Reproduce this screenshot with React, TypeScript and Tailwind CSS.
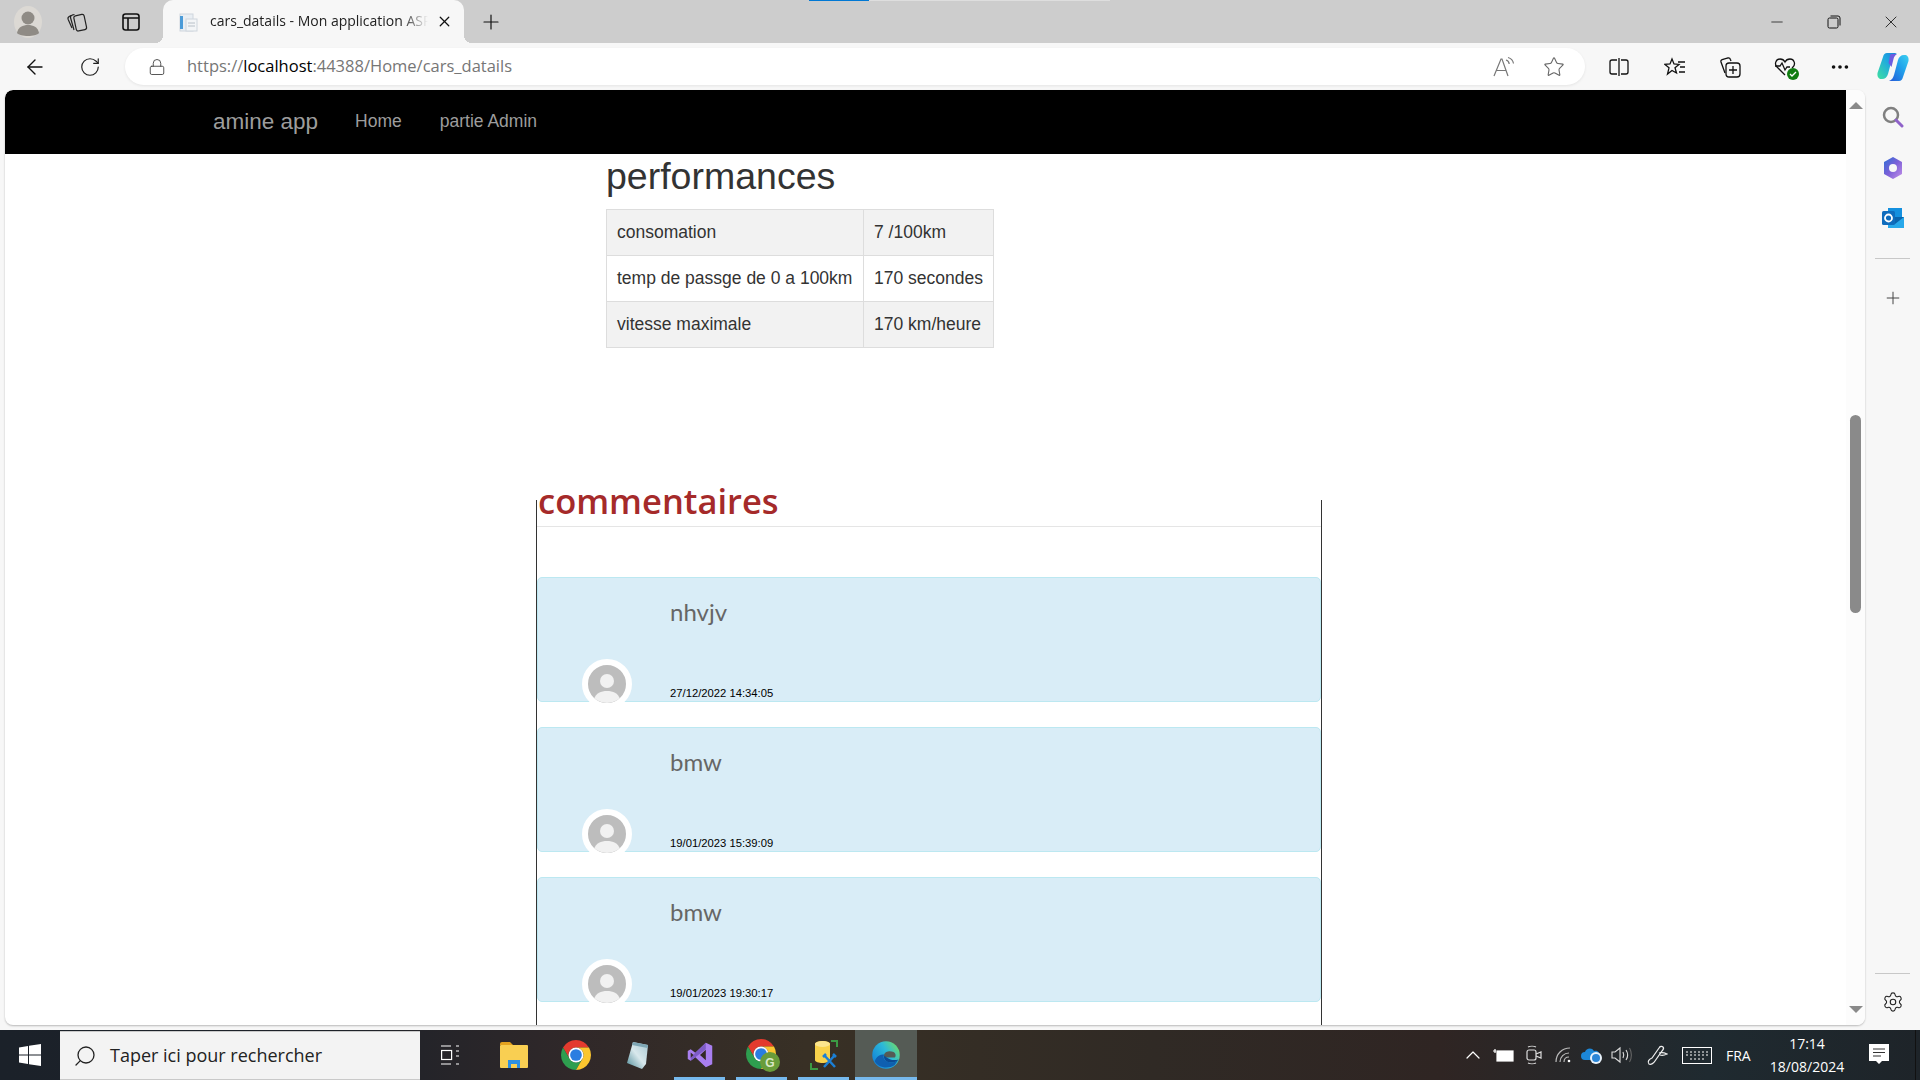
import { ArrowLeft, RotateCw, Plus, X, Minus, Star, Search, Ellipsis, Settings, ChevronUp, Lock } from "lucide-react"

const ui = "font-['Open_Sans',sans-serif]"

function Chrome({ size = 30 }: { size?: number }) {
  return (
    <svg width={size} height={size} viewBox="4 4 40 40">
      <path d="M6.68 14A20 20 0 0 1 41.32 14H24A10 10 0 0 0 15.34 29Z" fill="#e33b2e" />
      <path d="M6.68 14L15.34 29A10 10 0 0 0 32.66 29L24 44A20 20 0 0 1 6.68 14Z" fill="#2e9e4f" />
      <path d="M41.32 14A20 20 0 0 1 24 44L32.66 29A10 10 0 0 0 24 14Z" fill="#fbc62f" />
      <circle cx="24" cy="24" r="10" fill="#fff" />
      <circle cx="24" cy="24" r="7.8" fill="#2a7de1" />
    </svg>
  )
}

function Edge({ size = 30 }: { size?: number }) {
  return (
    <svg width={size} height={size} viewBox="0 0 48 48">
      <defs>
        <linearGradient id="edgeA" x1="1" y1="0.2" x2="0.1" y2="0.8">
          <stop offset="0" stopColor="#6fdc6a" />
          <stop offset="0.45" stopColor="#2cb9d8" />
          <stop offset="1" stopColor="#1487d9" />
        </linearGradient>
      </defs>
      <circle cx="24" cy="24" r="22" fill="url(#edgeA)" />
      <path d="M6 34c4 9 20 14 32 6l6-9c-5 5-11 5-16 4-7-2-9-7-7-12-6 0-13 3-15 11z" fill="#0f5fb0" />
      <path d="M21 23c2-6 10-6 15-4 4 2 4 7 2 9H26c-4 0-6-2-5-5z" fill="#555b55" />
      <path d="M21 25c-1 5 2 9 7 10 6 1 11 1 16-4-3 1-9 2-13 0-5-2-6-4-10-6z" fill="#0b4a94" />
    </svg>
  )
}

function VisualStudio() {
  return (
    <svg width="28" height="30" viewBox="0 0 48 48">
      <path d="M34 3L45 8V40L34 45L16 28L8 34L3 31V17L8 14L16 20Z" fill="#a97ff0" />
      <path d="M34 3L8 28V34L34 14Z" fill="#7e5cc6" />
      <path d="M34 15L24 24L34 33Z" fill="#332a26" />
      <path d="M8 19.5V28.5L13 24Z" fill="#332a26" />
    </svg>
  )
}

function Folder() {
  return (
    <svg width="30" height="28" viewBox="0 0 30 28">
      <path d="M1 3a2 2 0 0 1 2-2h8l3 3H1z" fill="#e3a21f" />
      <rect x="1" y="4" width="28" height="23" rx="1" fill="#f9cf52" />
      <path d="M9 27v-8h12v8h-3v-4h-6v4z" fill="#2d8fe0" />
    </svg>
  )
}

function Notepad() {
  return (
    <svg width="28" height="30" viewBox="0 0 28 30">
      <defs>
        <linearGradient id="padA" x1="0" y1="1" x2="1" y2="0">
          <stop offset="0" stopColor="#4d8b98" />
          <stop offset="0.5" stopColor="#d8e8ec" />
          <stop offset="1" stopColor="#a9c8d2" />
        </linearGradient>
      </defs>
      <path d="M9 2L24 5L22 24L18 29L3 23Z" fill="url(#padA)" />
      <path d="M9 2L24 5L23.6 8L8 5Z" fill="#7fa7b5" />
    </svg>
  )
}

function ChromeG() {
  return (
    <div className="relative w-[32px] h-[32px]">
      <Chrome size={30} />
      <svg width="20" height="20" viewBox="0 0 20 20" className="absolute right-[-2px] bottom-[-1px]">
        <circle cx="10" cy="10" r="10" fill="#6a9c3a" />
        <text x="10" y="14.5" textAnchor="middle" fontSize="12" fontWeight="700" fill="#dbe8c8" fontFamily="Liberation Sans">
          G
        </text>
      </svg>
    </div>
  )
}

function DbTools() {
  return (
    <svg width="30" height="32" viewBox="0 0 30 32">
      <path d="M6 5c0-4 15-4 15 0v16c0 4-15 4-15 0z" fill="#f8d24b" />
      <ellipse cx="13.5" cy="5" rx="7.5" ry="3" fill="#fbe58e" />
      <path d="M22 2h6v6M2 24v6h7" fill="none" stroke="#3b9a44" strokeWidth="2" />
      <path d="M15 28l11-12M26 28L15 16M14 18l3-3M24 15l3 3" stroke="#1b7fd6" strokeWidth="2.5" fill="none" />
    </svg>
  )
}

function Copilot() {
  return (
    <svg width="32" height="30" viewBox="0 0 32 30">
      <defs>
        <linearGradient id="copA" x1="0" y1="1" x2="1" y2="0">
          <stop offset="0" stopColor="#3fe0a0" />
          <stop offset="0.6" stopColor="#1fa8e0" />
          <stop offset="1" stopColor="#1a7fd8" />
        </linearGradient>
        <linearGradient id="copB" x1="0" y1="1" x2="1" y2="0">
          <stop offset="0" stopColor="#2458d8" />
          <stop offset="0.6" stopColor="#22a6ec" />
          <stop offset="1" stopColor="#3ed0f0" />
        </linearGradient>
      </defs>
      <path d="M10 1h10c-3 1-4 3-5 6l-4 15c-.8 3-3 5-6 5H3c-2-1-3-3-2.500-6L6 5c.6-2.500 2-4 4-4z" fill="url(#copA)" />
      <path d="M22 29H12c3-1 4-3 5-6l4-15c.8-3 3-5 6-5h2c2 1 3 3 2.500 6L26 25c-.6 2.500-2 4-4 4z" fill="url(#copB)" />
      <path d="M14 2h6c-2 1-3 3-3.500 5l-2 8-3-4 1-5c.4-2 .5-3 1.500-4z" fill="#6c5ce0" />
    </svg>
  )
}

function TabBar() {
  return (
    <div className={`relative h-[43px] bg-[#cdcdcd] flex items-end ${ui}`}>
      <div className="absolute top-0 left-[809px] w-[301px] h-px bg-[#dedede]">
        <div className="w-[60px] h-px bg-[#0078d4]" />
      </div>
      <div className="h-[43px] w-[56px] flex items-center justify-center">
        <svg width="30" height="32" viewBox="0 0 30 32">
          <ellipse cx="15" cy="16" rx="14" ry="16" fill="#dcd9d4" />
          <circle cx="15" cy="12" r="6.5" fill="#8f8b85" />
          <path d="M4 27c1-6 6-8 11-8s10 2 11 8c-3 4-19 4-22 0z" fill="#8f8b85" />
        </svg>
      </div>
      <div className="h-[43px] w-[42px] flex items-center justify-center">
        <svg width="22" height="22" viewBox="0 0 22 22" fill="none" stroke="#222" strokeWidth="1.2">
          <rect x="9" y="4" width="10.500" height="15.500" rx="2" transform="rotate(-12 14 12)" />
          <path d="M8.500 3.500L6 4.200C4.700 4.600 4.200 5.600 4.600 7L8 19" />
          <path d="M5 4.500L3.200 5.500C2 6.200 1.700 7.300 2.200 8.500L6 17" />
        </svg>
      </div>
      <div className="h-[43px] w-[65px] flex items-center justify-center">
        <svg width="18" height="18" viewBox="0 0 18 18" fill="none" stroke="#111" strokeWidth="1.6">
          <rect x="1" y="1" width="16" height="16" rx="2.500" />
          <path d="M1 5h16M6 5v12" />
        </svg>
      </div>
      <div className="relative h-[43px] w-[301px] bg-[#f7f7f7] rounded-t-[10px] flex items-center">
        <span className="absolute bottom-0 left-[-8px] w-[8px] h-[8px] bg-[radial-gradient(circle_at_0_0,#cdcdcd_8px,#f7f7f7_8px)]" />
        <span className="absolute bottom-0 right-[-8px] w-[8px] h-[8px] bg-[radial-gradient(circle_at_100%_0,#cdcdcd_8px,#f7f7f7_8px)]" />
        <svg width="20" height="20" viewBox="0 0 20 20" className="ml-[15px] shrink-0">
          <rect x="2" y="2" width="13" height="17" fill="#e9eef3" stroke="#cfd6dd" />
          <rect x="2" y="4" width="3" height="13" fill="#4b9bd8" />
          <rect x="8" y="7" width="11" height="12" fill="#f3f5f7" stroke="#cfd6dd" />
          <path d="M10 11h7M10 14h7" stroke="#b8c0c8" />
        </svg>
        <div className="ml-[12px] -mt-[2px] w-[218px] overflow-hidden whitespace-nowrap text-[14px] text-[#222] [mask-image:linear-gradient(to_right,black_88%,transparent)]">
          cars_datails - Mon application ASP.NET
        </div>
        <X size={17} strokeWidth={1.8} className="ml-[8px] text-[#111]" />
      </div>
      <div className="h-[43px] w-[54px] flex items-center justify-center">
        <Plus size={24} strokeWidth={1.2} className="text-[#111]" />
      </div>
      <div className="ml-auto h-[43px] flex items-center text-[#111]">
        <div className="w-[56px] flex justify-center pr-[2px]">
          <Minus size={18} strokeWidth={1} />
        </div>
        <div className="w-[56px] flex justify-center">
          <svg width="14" height="14" viewBox="0 0 14 14" fill="none" stroke="#111" strokeWidth="1">
            <rect x="1" y="3" width="10" height="10" rx="1.500" />
            <path d="M3.500 1h7.500a2 2 0 0 1 2 2v7.500" />
          </svg>
        </div>
        <div className="w-[58px] flex justify-center">
          <X size={20} strokeWidth={1} />
        </div>
      </div>
    </div>
  )
}

function Toolbar() {
  return (
    <div className={`h-[47px] bg-[#f7f7f7] flex items-center ${ui}`}>
      <div className="w-[70px] flex justify-center">
        <ArrowLeft size={24} strokeWidth={1.4} className="text-[#111]" />
      </div>
      <div className="w-[40px] flex justify-center">
        <RotateCw size={22} strokeWidth={1.3} className="text-[#222]" />
      </div>
      <div className="ml-[15px] w-[1460px] h-[37px] rounded-full bg-white shadow-[0_1px_3px_rgba(0,0,0,0.08)] flex items-center">
        <Lock size={18} strokeWidth={1.2} className="ml-[23px] text-[#444]" />
        <div className="ml-[21px] text-[16.5px] text-[#767676]">
          https://<span className="text-black">localhost</span>:44388/Home/cars_datails
        </div>
        <svg width="22" height="22" viewBox="0 0 22 22" fill="none" stroke="#777" strokeWidth="1.2" className="ml-auto mr-[28px]">
          <path d="M1 20L8 3h1l6 17M3.500 14.500h9.500" />
          <path d="M13 4c2 .5 3 2 3.200 4M15 1.500c3 .8 5 3 5.500 6" />
        </svg>
        <Star size={22} strokeWidth={1.2} className="mr-[20px] text-[#666]" />
      </div>
      <div className="ml-[23px] flex items-center text-[#111]">
        <div className="w-[22px] flex justify-center">
          <svg width="20" height="20" viewBox="0 0 20 20" fill="none" stroke="#111" strokeWidth="1.3">
            <path d="M8 3H3a2 2 0 0 0-2 2v10a2 2 0 0 0 2 2h5M12 3h5a2 2 0 0 1 2 2v10a2 2 0 0 1-2 2h-5M10 1v18" />
          </svg>
        </div>
        <div className="ml-[34px] w-[22px] flex justify-center">
          <svg width="22" height="20" viewBox="0 0 22 20" fill="none" stroke="#111" strokeWidth="1.3">
            <path d="M8 2l2 5 5 .4-4 3.400 1.500 5.200L8 13.500 3.500 17 5 10.800 1 7.400 6 7z" />
            <path d="M14 5h7M16 10h5M15 15h6" />
          </svg>
        </div>
        <div className="ml-[33px] w-[22px] flex justify-center">
          <svg width="22" height="22" viewBox="0 0 22 22" fill="none" stroke="#111" strokeWidth="1.3">
            <path d="M6 17L2 6c-.3-1 .2-2 1.200-2.300L9 2c1-.2 2 .3 2.300 1.200L12 5" />
            <rect x="7" y="7" width="14" height="14" rx="3" />
            <path d="M14 10v8M10 14h8" />
          </svg>
        </div>
        <div className="ml-[33px] relative w-[22px] flex justify-center">
          <svg width="22" height="20" viewBox="0 0 22 20" fill="none" stroke="#111" strokeWidth="1.3">
            <path d="M11 18L3 10C0 7 2 2 6 2c2 0 4 1 5 3 1-2 3-3 5-3 4 0 6 5 3 8l-1 1" />
            <path d="M1 9h5l2-3 3 7 2-3h3" />
          </svg>
          <svg width="12" height="12" viewBox="0 0 12 12" className="absolute right-[-3px] bottom-[-3px]">
            <circle cx="6" cy="6" r="6" fill="#107c10" />
            <path d="M3 6l2 2 4-4" stroke="#fff" strokeWidth="1.300" fill="none" />
          </svg>
        </div>
        <div className="ml-[33px] w-[22px] flex justify-center">
          <Ellipsis size={22} strokeWidth={2} />
        </div>
        <div className="ml-[26px] w-[32px] flex justify-center">
          <Copilot />
        </div>
      </div>
    </div>
  )
}

function Avatar() {
  return (
    <div className="relative z-10 shrink-0 w-[50px] h-[50px] rounded-full border-[6px] border-white bg-[#bdbdbd] overflow-hidden -mb-[8px] mt-auto ml-[44px]">
      <svg width="38" height="38" viewBox="0 0 38 38">
        <circle cx="19" cy="16" r="7" fill="#f1f1f1" />
        <path d="M6 34c2-6 7-8 13-8s11 2 13 8v4H6z" fill="#f1f1f1" />
      </svg>
    </div>
  )
}

function Comment({ text, date }: { text: string; date: string }) {
  return (
    <div className="h-[125px] mb-[25px] flex bg-[#d9edf7] border border-[#bce8f1] rounded-[5px]">
      <Avatar />
      <div className="ml-[38px] flex flex-col flex-1">
        <div className="mt-[18px] text-[24px] leading-[32px] text-[#666] font-['Lato',sans-serif]">{text}</div>
        <div className="mt-auto text-[11.25px] leading-[16px] text-black font-['Liberation_Sans',sans-serif]">{date}</div>
      </div>
    </div>
  )
}

function Perf({ label, value, odd }: { label: string; value: string; odd?: boolean }) {
  const cell = `border border-[#ddd] px-[10px] py-[10px] leading-[25px] whitespace-nowrap ${odd ? "bg-[#f2f2f2]" : "bg-white"}`
  return (
    <tr>
      <td className={`${cell} w-[257px]`}>{label}</td>
      <td className={cell}>{value}</td>
    </tr>
  )
}

function Page() {
  return (
    <div className="w-[1841px] h-full overflow-hidden font-['Liberation_Sans',sans-serif]">
      <nav className="h-[64px] bg-black flex items-center text-[#9d9d9d] text-[17.5px] pl-[208px] rounded-tl-[8px]">
        <span className="text-[22.5px]">amine app</span>
        <span className="ml-[37px] -mt-[2px]">Home</span>
        <span className="ml-[38px] -mt-[2px]">partie Admin</span>
      </nav>
      <div className="ml-[601px]">
        <h2 className="h-[55px] pb-[10px] flex items-center text-[37.5px] text-[#333] leading-none">performances</h2>
        <table className="border-collapse text-[17.5px] text-[#333]">
          <tbody>
            <Perf label="consomation" value="7 /100km" odd />
            <Perf label="temp de passge de 0 a 100km" value="170 secondes" />
            <Perf label="vitesse maximale" value="170 km/heure" odd />
          </tbody>
        </table>
      </div>
      <div className="mt-[152px] ml-[531px] w-[786px] h-[600px] border-x border-[#333]">
        <div className="flex h-[27px] border-b border-[#e5e5e5] mb-[50px]">
          <h2 className="-mt-[17px] pl-[1px] h-[36px] text-[#a52a2a] text-[34.5px] leading-[36px] font-semibold font-['Open_Sans',sans-serif]">commentaires</h2>
        </div>
        <Comment text="nhvjv" date="27/12/2022 14:34:05" />
        <Comment text="bmw" date="19/01/2023 15:39:09" />
        <Comment text="bmw" date="19/01/2023 19:30:17" />
      </div>
    </div>
  )
}

function Scrollbar() {
  return (
    <div className="w-[19px] h-full bg-[#fcfcfc] flex flex-col items-center">
      <div className="mt-[12px] w-0 h-0 border-x-[7px] border-x-transparent border-b-[7px] border-b-[#8a8a8a]" />
      <div className="mt-[306px] w-[11px] h-[198px] rounded-full bg-[#8a8a8a]" />
      <div className="mt-auto mb-[12px] w-0 h-0 border-x-[7px] border-x-transparent border-t-[7px] border-t-[#8a8a8a]" />
    </div>
  )
}

function Sidebar() {
  return (
    <div className="flex-1 h-[935px] flex flex-col items-center">
      <div className="mt-[15px] h-[24px]">
        <svg width="22" height="24" viewBox="0 0 22 24" fill="none">
          <circle cx="9" cy="10" r="7" stroke="#808080" strokeWidth="2.500" />
          <path d="M14 15l6 6" stroke="#8f62c9" strokeWidth="3" strokeLinecap="round" />
        </svg>
      </div>
      <div className="mt-[27px] h-[24px]">
        <svg width="22" height="24" viewBox="0 0 22 24">
          <defs>
            <linearGradient id="m365" x1="0" y1="0" x2="1" y2="1">
              <stop offset="0" stopColor="#2d6fd6" />
              <stop offset="0.5" stopColor="#7c60d8" />
              <stop offset="1" stopColor="#c490e8" />
            </linearGradient>
          </defs>
          <path d="M11 1l9 5v12l-9 5-9-5V6z" fill="url(#m365)" />
          <circle cx="11" cy="12" r="4" fill="#f7f7f7" />
        </svg>
      </div>
      <div className="mt-[27px] h-[22px]">
        <svg width="22" height="22" viewBox="0 0 22 22">
          <rect x="6" y="1" width="14" height="10" fill="#1490df" />
          <path d="M6 10l16 0v11H6z" fill="#28a8ea" />
          <path d="M22 10L13 17l-7-5v-2z" fill="#0a64ad" />
          <rect x="0" y="4" width="13" height="14" rx="1.500" fill="#0f6cbd" />
          <circle cx="6.500" cy="11" r="3.500" fill="none" stroke="#fff" strokeWidth="1.800" />
        </svg>
      </div>
      <div className="mt-[29px] w-[35px] h-px bg-[#c8c8c8]" />
      <Plus size={20} strokeWidth={1.2} className="mt-[29px] text-[#444]" />
      <div className="mt-auto w-[35px] h-px bg-[#c8c8c8]" />
      <Settings size={22} strokeWidth={1.2} className="mt-[17px] mb-[12px] text-[#222]" />
    </div>
  )
}

function TaskIcon({ children, active, open }: { children: React.ReactNode; active?: boolean; open?: boolean }) {
  return (
    <div className={`relative w-[62px] h-[50px] flex items-center justify-center ${active ? "bg-[#555b55]" : ""}`}>
      {children}
      {open && <span className={`absolute bottom-0 h-[3px] bg-[#76b9ed] ${active ? "left-0 right-0" : "left-[5px] right-[6px]"}`} />}
    </div>
  )
}

function Taskbar() {
  return (
    <div className={`h-[50px] flex items-center bg-[linear-gradient(to_right,#1b2129_0%,#1e2229_18%,#302829_30%,#383025_42%,#302a25_60%,#2f2523_75%,#1f2a30_89%,#1e2429_100%)] ${ui}`}>
      <div className="w-[60px] flex justify-center">
        <svg width="22" height="22" viewBox="0 0 22 22" fill="#fff">
          <path d="M0 3.500L9 2v8.500H0zM10 1.800L22 0v10.500H10zM0 11.500h9V20l-9-1.500zM10 11.500h12V22l-12-1.800z" />
        </svg>
      </div>
      <div className="w-[360px] h-[49px] mt-px bg-[#f3f3f3] border-y border-[#c9c9c9] flex items-center">
        <Search size={24} strokeWidth={1.3} className="ml-[13px] -scale-x-100 text-[#222]" />
        <span className="ml-[13px] text-[18px] text-[#222]">Taper ici pour rechercher</span>
      </div>
      <div className="w-[60px] flex justify-center">
        <svg width="18" height="20" viewBox="0 0 18 20" fill="none" stroke="#fff" strokeWidth="1.200">
          <path d="M0 1h10M15 1h3M0 19h10M15 19h3M15 6h3M15 11h3" />
          <rect x=".6" y="5.500" width="10" height="9" />
        </svg>
      </div>
      <div className="ml-[3px] flex">
        <TaskIcon><Folder /></TaskIcon>
        <TaskIcon><Chrome /></TaskIcon>
        <TaskIcon><Notepad /></TaskIcon>
        <TaskIcon open><VisualStudio /></TaskIcon>
        <TaskIcon open><ChromeG /></TaskIcon>
        <TaskIcon open><DbTools /></TaskIcon>
        <TaskIcon open active><Edge /></TaskIcon>
      </div>
      <div className="ml-auto flex items-center text-white">
        <ChevronUp size={24} strokeWidth={1.2} />
        <svg width="22" height="14" viewBox="0 0 22 14" className="ml-[8px]" fill="none" stroke="#fff" strokeWidth="1.200">
          <rect x="4" y="3" width="16" height="10" fill="#fff" />
          <path d="M0 3h3M2 1v4" />
        </svg>
        <svg width="16" height="20" viewBox="0 0 16 20" className="ml-[11px]" fill="none" stroke="#ddd" strokeWidth="1.200">
          <rect x="1" y="5" width="9" height="10" rx="2" />
          <path d="M10 9l5-2v6l-5-2M2 2c2-1 6-1 8 0M2 18c2 1 6 1 8 0" />
        </svg>
        <svg width="18" height="16" viewBox="0 0 18 16" className="ml-[13px]" fill="none" stroke="#bbb" strokeWidth="1.200">
          <path d="M1 15C1 7 7 1 15 1M5 15c0-5 4-9 9-9M9 15c0-3 2-5 5-5" />
          <circle cx="14" cy="14" r="1.300" fill="#fff" stroke="none" />
        </svg>
        <svg width="22" height="18" viewBox="0 0 22 18" className="ml-[8px]">
          <path d="M4 14a4 4 0 0 1 0-8c1-4 7-5 9-1 4-1 6 2 5 5 0 3-1 4-3 4z" fill="#1c87d8" />
          <circle cx="15" cy="12" r="6" fill="#e8f2fb" />
          <circle cx="15" cy="12" r="4" fill="#2a86d8" />
        </svg>
        <svg width="22" height="18" viewBox="0 0 22 18" className="ml-[8px]" fill="none" stroke="#ddd" strokeWidth="1.100">
          <path d="M1 6h3l5-4v14l-5-4H1z" />
          <path d="M12 6c1 2 1 4 0 6M15 4c2 3 2 7 0 10" />
          <path d="M18.500 2c2.500 4 2.500 10 0 14" stroke="#666" />
        </svg>
        <svg width="22" height="22" viewBox="0 0 22 22" className="ml-[13px]" fill="none" stroke="#eee" strokeWidth="1.200">
          <path d="M3 20c-2-2 0-5 3-6l7-10c1-2 3-2 4-1s0 3-1 4l-7 10c-1 2-4 4-6 3z" />
          <path d="M13 9c3-1 6 0 8 1-2 1-4 2-7 1" />
        </svg>
        <svg width="30" height="17" viewBox="0 0 30 17" className="ml-[14px]" fill="none" stroke="#fff" strokeWidth="1">
          <rect x=".5" y=".5" width="29" height="16" />
          <path d="M4 5h22M4 8h22M8 12h14" strokeDasharray="2 2" />
        </svg>
        <span className="ml-[14px] w-[25px] text-[14px] text-white">FRA</span>
        <div className="ml-[18px] w-[76px] text-center text-[14px] leading-[23px] text-white">
          <div>17:14</div>
          <div>18/08/2024</div>
        </div>
        <svg width="20" height="22" viewBox="0 0 20 22" className="ml-[24px]">
          <path d="M0 0h20v17h-7l-3 3-3-3H0z" fill="#fff" />
          <path d="M4 5h12M4 8.500h12M4 12h8" stroke="#333" strokeWidth="1" />
        </svg>
        <div className="ml-[26px] w-px h-[50px] bg-[#111]" />
        <div className="w-[4px]" />
      </div>
    </div>
  )
}

export default function App() {
  return (
    <div className="w-[1920px] h-[1080px] flex flex-col overflow-hidden bg-[#f7f7f7]">
      <TabBar />
      <Toolbar />
      <div className="h-[940px] flex pl-[5px]">
        <div className="w-[1860px] h-[935px] flex bg-white rounded-t-[8px] rounded-b-[8px] shadow-[0_1px_2px_rgba(0,0,0,0.25)] overflow-hidden">
          <Page />
          <Scrollbar />
        </div>
        <Sidebar />
      </div>
      <Taskbar />
    </div>
  )
}
